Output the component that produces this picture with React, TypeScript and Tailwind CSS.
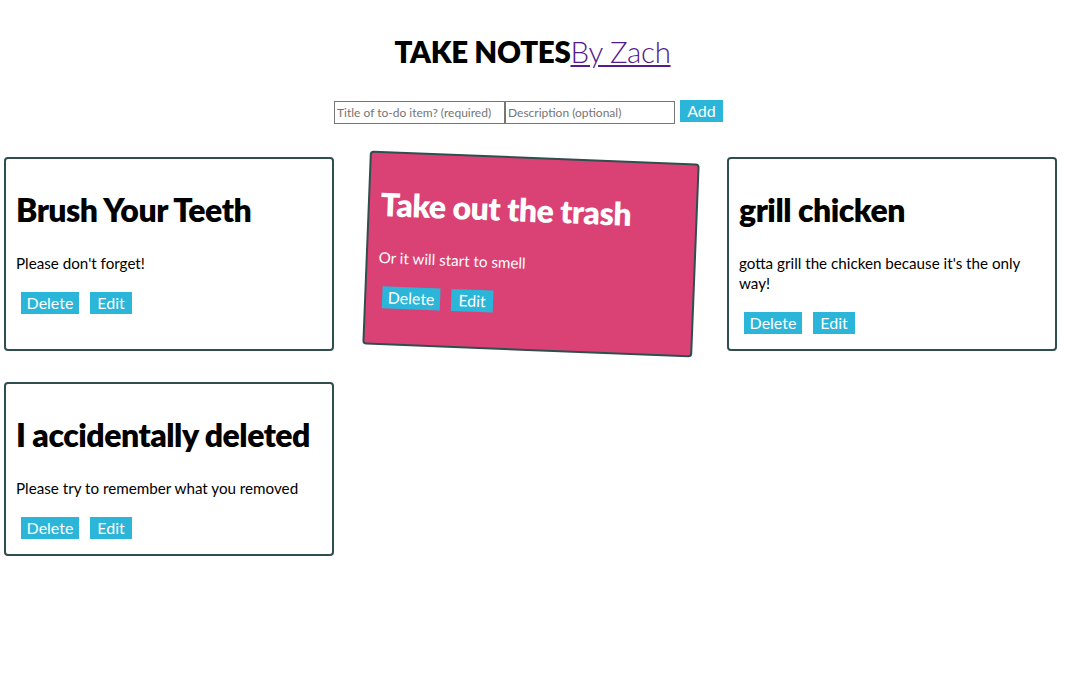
import React from 'react'

type Note = {
  title: string
  body: string
  hot?: boolean
}

const notes: Note[] = [
  { title: 'Brush Your Teeth', body: "Please don't forget!" },
  { title: 'Take out the trash', body: 'Or it will start to smell', hot: true },
  { title: 'grill chicken', body: "gotta grill the chicken because it's the only way!" },
  { title: 'I accidentally deleted', body: 'Please try to remember what you removed' },
]

const NoteCard = ({ note }: { note: Note }) => {
  return (
    <div
      className={
        note.hot
          ? 'w-[330px] border-2 border-[#2f4f4f] rounded-[4px] px-[11px] pt-[31px] pb-[15px] bg-[#da4174] text-white rotate-[2.25deg]'
          : 'w-[330px] border-2 border-[#2f4f4f] rounded-[4px] px-[10px] pt-[31px] pb-[15px] bg-white text-black'
      }
    >
      <h2 className="text-[32px] font-extrabold leading-[40px] tracking-[-0.5px]">{note.title}</h2>
      <p className="mt-[23px] text-[15.2px] leading-[20px]">{note.body}</p>
      <div className="flex gap-[11px] pl-[5px] mt-[19px]">
        <button className="w-[58px] h-[22px] bg-[#2bb5d9] text-white text-[16px] leading-[22px]">Delete</button>
        <button className="w-[42px] h-[22px] bg-[#2bb5d9] text-white text-[16px] leading-[22px]">Edit</button>
      </div>
    </div>
  )
}

const App = () => {
  return (
    <div className="min-h-screen bg-white text-black" style={{ fontFamily: 'Lato, "Noto Sans", sans-serif' }}>
      <h1 className="pt-[32px] text-center text-[29.5px] font-extrabold leading-[40px] tracking-[-0.3px]">
        TAKE NOTES
        <a href="#" className="font-light underline text-[#551a8b]">By Zach</a>
      </h1>
      <form className="flex justify-center items-start mt-[29px] pr-[8px]" onSubmit={(e) => e.preventDefault()}>
        <input
          className="w-[171px] h-[23px] border border-[#767676] px-[2px] text-[12px] placeholder:text-[#757575] outline-none"
          placeholder="Title of to-do item? (required)"
        />
        <input
          className="w-[170px] h-[23px] border border-[#767676] px-[2px] text-[12px] placeholder:text-[#757575] outline-none"
          placeholder="Description (optional)"
        />
        <button className="ml-[5px] -mt-[1px] w-[43px] h-[22px] bg-[#2bb5d9] text-white text-[16px] leading-[22px]">Add</button>
      </form>
      <div className="flex flex-wrap gap-x-[31.5px] gap-y-[31px] pl-[4px] mt-[33px]">
        {notes.map((n) => (
          <NoteCard key={n.title} note={n} />
        ))}
      </div>
    </div>
  )
}

export default App
